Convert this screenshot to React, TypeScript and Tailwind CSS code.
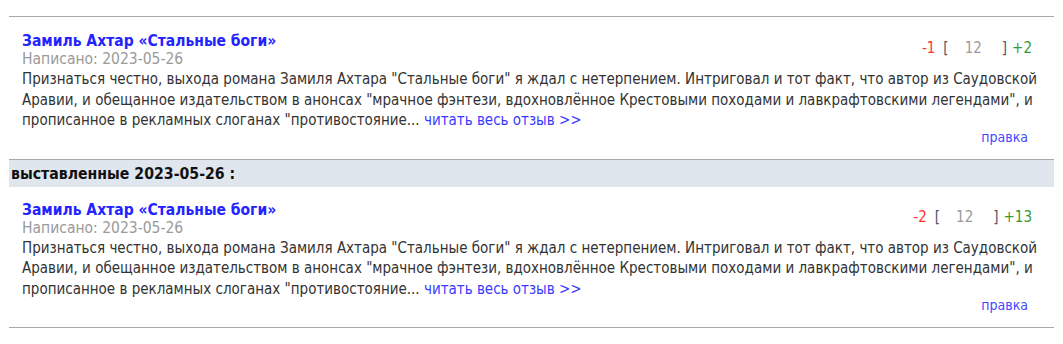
import * as React from "react";

type Review = {
  title: string;
  date: string;
  minus: string;
  total: string;
  plus: string;
  text: string;
};

const review: Review = {
  title: "Замиль Ахтар «Стальные боги»",
  date: "2023-05-26",
  minus: "-1",
  total: "12",
  plus: "+2",
  text:
    "Признаться честно, выхода романа Замиля Ахтара \"Стальные боги\" я ждал с нетерпением. Интриговал и тот факт, что автор из Саудовской Аравии, и обещанное издательством в анонсах \"мрачное фэнтези, вдохновлённое Крестовыми походами и лавкрафтовскими легендами\", и прописанное в рекламных слоганах \"противостояние...",
};

function Divider() {
  return <div className="h-px bg-[#a9a9a9]" />;
}

function ReviewItem({ r }: { r: Review }) {
  return (
    <div className="pl-[13px]">
      <div className="flex items-start justify-between pr-[22px]">
        <div>
          <a className="block text-[15.5px] font-bold leading-[18px] text-[#2323ff]">{r.title}</a>
          <div className="text-[15.5px] leading-[18px] text-[#9a9a9a]">Написано: {r.date}</div>
        </div>
        <div className="mt-[7px] flex items-center text-[15px] leading-[18px]">
          <span className="text-[#ff3333]">{r.minus}</span>
          <span className="ml-[8px] text-[#556]">[</span>
          <span className="ml-[16px] text-[#999]">{r.total}</span>
          <span className="ml-[20px] text-[#556]">]</span>
          <span className="ml-[5px] text-[#339933]">{r.plus}</span>
        </div>
      </div>
      <p className="mt-[1px] pr-[6px] text-[15px] leading-[20.5px] text-[#333]">
        {r.text} <a className="text-[#3a3aff]">читать весь отзыв &gt;&gt;</a>
      </p>
      <div className="pr-[26px] text-right text-[14px] leading-[13px]">
        <a className="text-[#4646ff]">правка</a>
      </div>
    </div>
  );
}

export default function App() {
  return (
    <div
      className="bg-white px-[9px] pt-[16px] pb-[17px]"
      style={{ fontFamily: 'Tahoma, "DejaVu Sans Condensed", "DejaVu Sans", sans-serif' }}
    >
      <Divider />
      <div className="pt-[15px] pb-[15px]">
        <ReviewItem r={review} />
      </div>
      <Divider />
      <div className="bg-[#dfe6ee] px-[2px] text-[15.7px] font-bold leading-[27px] text-[#111]">
        выставленные 2023-05-26 :
      </div>
      <div className="pt-[14px] pb-[15px]">
        <ReviewItem r={{ ...review, minus: "-2", plus: "+13" }} />
      </div>
      <Divider />
    </div>
  );
}
